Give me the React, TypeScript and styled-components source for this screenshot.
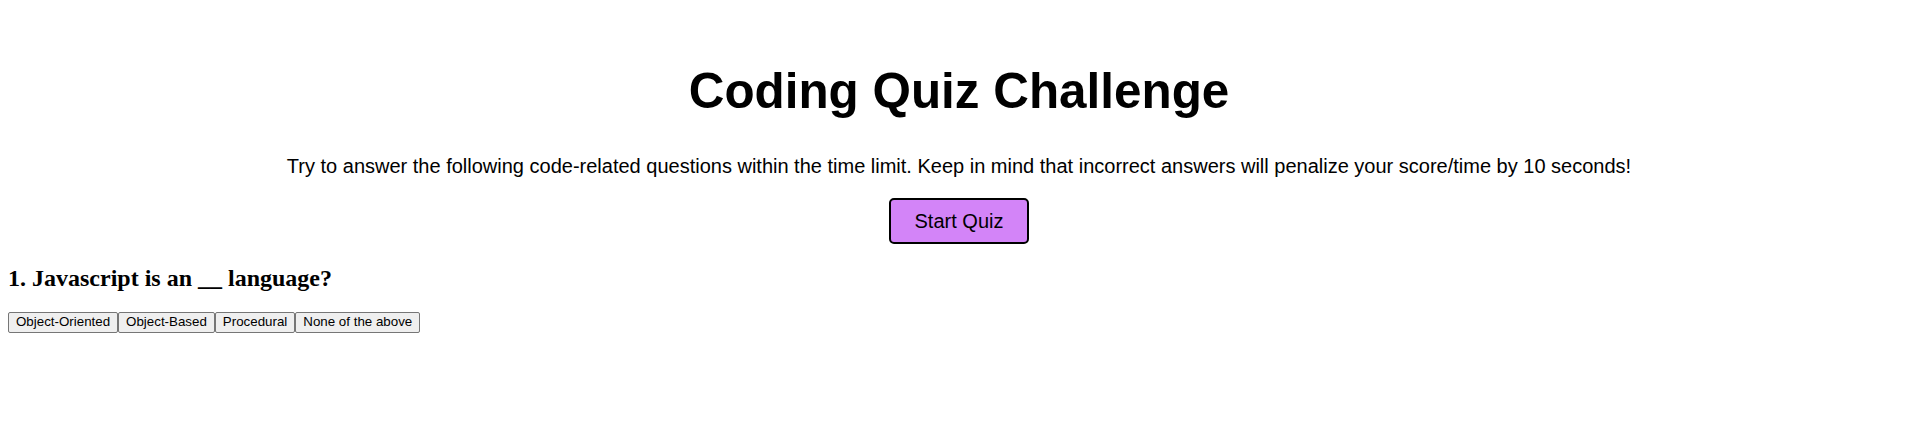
import React from "react";
import styled, { createGlobalStyle } from "styled-components";

const GlobalStyle = createGlobalStyle`
  html, body {
    margin: 0;
    padding: 0;
    background: #ffffff;
  }
  body {
    margin: 8px;
    font-family: "Liberation Serif", "Times New Roman", serif;
    color: #000000;
  }
`;

const Intro = styled.section`
  display: flex;
  flex-direction: column;
  align-items: center;
  text-align: center;
  font-family: "Liberation Sans", Arial, sans-serif;
`;

const Title = styled.h1`
  margin: 55px 0 0;
  font-size: 49.4px;
  font-weight: 700;
  line-height: 55px;
`;

const Lead = styled.p`
  margin: 37px 0 20px;
  font-size: 20px;
  line-height: 23px;
`;

const StartButton = styled.button`
  font-family: "Liberation Sans", Arial, sans-serif;
  font-size: 20px;
  line-height: 23px;
  padding: 9.5px 23.5px;
  background: #d384f8;
  color: #000000;
  border: 2px solid #000000;
  border-radius: 5px;
  cursor: pointer;
`;

const Question = styled.section`
  display: flex;
  flex-direction: column;
  align-items: flex-start;
`;

const QuestionText = styled.h2`
  margin: 20.5px 0 20px;
  font-size: 24px;
  font-weight: 700;
  font-family: "Liberation Serif", "Times New Roman", serif;
`;

const Answers = styled.div`
  display: flex;
`;

const AnswerButton = styled.button`
  font-family: "Liberation Sans", Arial, sans-serif;
  font-size: 13.333px;
  line-height: 16px;
  padding: 1.5px 7px;
  background: #efefef;
  color: #000000;
  border: 1px solid #767676;
  border-radius: 2px;
  cursor: pointer;
`;

const answers = ["Object-Oriented", "Object-Based", "Procedural", "None of the above"];

export default function App() {
  return (
    <>
      <GlobalStyle />
      <Intro>
        <Title>Coding Quiz Challenge</Title>
        <Lead>
          Try to answer the following code-related questions within the time limit. Keep in mind that
          incorrect answers will penalize your score/time by 10 seconds!
        </Lead>
        <StartButton>Start Quiz</StartButton>
      </Intro>
      <Question>
        <QuestionText>1. Javascript is an __ language?</QuestionText>
        <Answers>
          {answers.map((a) => (
            <AnswerButton key={a}>{a}</AnswerButton>
          ))}
        </Answers>
      </Question>
    </>
  );
}
